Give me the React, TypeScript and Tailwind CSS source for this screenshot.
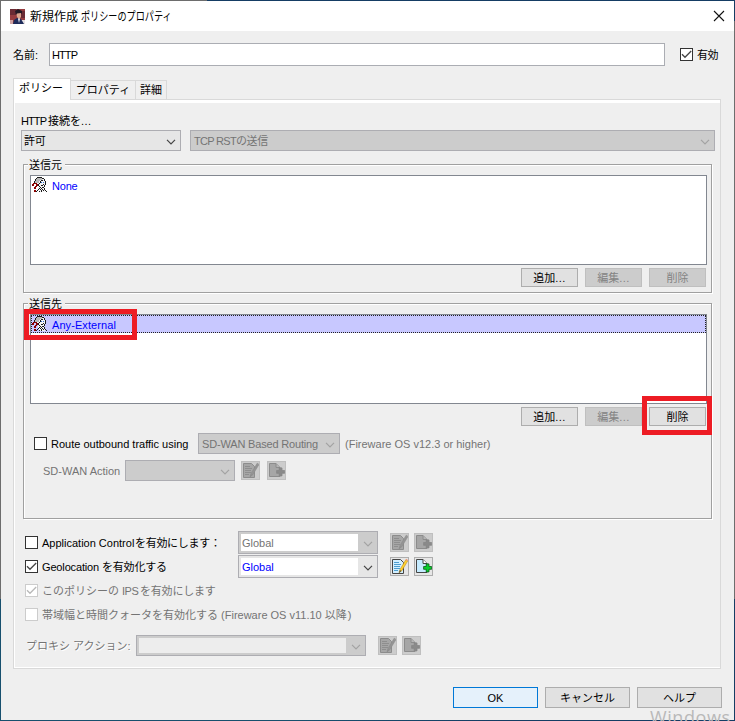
import type { ReactNode } from "react";

function Check({ checked = false, disabled = false }: { checked?: boolean; disabled?: boolean }) {
  return (
    <span className={`block size-[13px] shrink-0 border bg-white ${disabled ? "border-[#cccccc]" : "border-[#333333]"}`}>
      {checked && (
        <svg viewBox="0 0 11 11" className="block size-[11px]" fill="none" stroke={disabled ? "#b8b8b8" : "#444"} strokeWidth="1.3">
          <path d="M1 5.3 4 8.3 10.2 2" />
        </svg>
      )}
    </span>
  );
}

function Chevron({ disabled = false }: { disabled?: boolean }) {
  return (
    <svg viewBox="0 0 10 6" className="mt-[2px] h-[6px] w-[10px] shrink-0" fill="none" stroke={disabled ? "#a3a3a3" : "#444"} strokeWidth="1.2">
      <path d="M1 0.8 5 4.8 9 0.8" />
    </svg>
  );
}

function Select({ className, disabled = false, children }: { className: string; disabled?: boolean; children?: ReactNode }) {
  return (
    <div className={`flex h-[21px] shrink-0 items-center justify-between border border-[#adadb2] pr-[4px] pl-[3px] ${disabled ? "bg-[#cccccc] text-[#747474]" : "bg-[#e6e6e6]"} ${className}`}>
      <span>{children}</span>
      <Chevron disabled={disabled} />
    </div>
  );
}

function Combo({ className, disabled = false, children }: { className: string; disabled?: boolean; children?: ReactNode }) {
  return (
    <div className={`flex shrink-0 items-stretch border border-[#adadb2] p-[2px] ${disabled ? "bg-[#cccccc] text-[#747474]" : "bg-[#e6e6e6] text-[#0000ff]"} ${className}`}>
      <span className={`flex flex-1 items-center pl-px ${children ? "bg-white" : "bg-[#ededed]"}`}>{children}</span>
      <span className="flex w-[17px] items-center justify-end pr-[2px]">
        <Chevron disabled={disabled} />
      </span>
    </div>
  );
}

function SmallButton({ disabled = false, children }: { disabled?: boolean; children: ReactNode }) {
  return (
    <button className={`flex h-[19px] w-[57px] items-center justify-center border ${disabled ? "border-[#bfbfbf] bg-[#cccccc] text-[#838383]" : "border-[#adadad] bg-[#e1e1e1]"}`}>
      {children}
    </button>
  );
}

function Dots() {
  return <span className="tracking-[0.4px]">...</span>;
}

function EditIcon({ disabled = false }: { disabled?: boolean }) {
  const outline = disabled ? "#8c8c8c" : "#444";
  return (
    <span className={`block size-[19px] shrink-0 border ${disabled ? "border-[#bfbfbf] bg-[#cccccc]" : "border-[#adadad] bg-[#e6e6e6]"}`}>
      <svg viewBox="0 0 17 17" className="block size-[17px]">
        <path d="M1.5 1.5h8l3 3v11h-11z" fill={disabled ? "#a6a6a6" : "#d2efff"} stroke={outline} />
        <path d="M3 4.5h5M3 6.5h7M3 8.5h6M3 10.5h6M3 12.5h4" stroke={disabled ? "#8e8e8e" : "#4d9ed0"} />
        <path d="M8 14.8 9 11.5 15 1.5 16.8 2.8 10.6 13z" fill={disabled ? "#949494" : "#ffd42e"} stroke={disabled ? "#8b8b8b" : "#c28c1e"} strokeWidth=".6" />
        <path d="M8 15 8.9 12 10.3 13z" fill={outline} />
        <path d="M14.6 2 15.3 .8 17 2 16.3 3.2z" fill={disabled ? "#999" : "#ed9a80"} />
      </svg>
    </span>
  );
}

function NewIcon({ disabled = false }: { disabled?: boolean }) {
  return (
    <span className={`block size-[19px] shrink-0 border ${disabled ? "border-[#bfbfbf] bg-[#cccccc]" : "border-[#adadad] bg-[#e6e6e6]"}`}>
      <svg viewBox="0 0 17 17" className="block size-[17px]">
        <path d="M1.5 1.5h6.5l4 4v9h-10.5z" fill={disabled ? "#a6a6a6" : "#c5ebff"} stroke={disabled ? "#8c8c8c" : "#444"} />
        <path d="M8 1.5v4h4" fill={disabled ? "#b5b5b5" : "#fff"} stroke={disabled ? "#8c8c8c" : "#444"} />
        <path d="M11.2 5.9h2.8v2.6h2.6v2.8h-2.6v2.6h-2.8v-2.6H8.6V8.5h2.6z" fill={disabled ? "#8a8a8a" : "#06d02b"} stroke={disabled ? "#868686" : "#075c18"} strokeWidth=".8" />
      </svg>
    </span>
  );
}

function IconPair({ disabled = false, className = "" }: { disabled?: boolean; className?: string }) {
  return (
    <div className={`flex gap-[5px] ${className}`}>
      <EditIcon disabled={disabled} />
      <NewIcon disabled={disabled} />
    </div>
  );
}

function AliasIcon() {
  return (
    <svg viewBox="0 0 16 16" className="size-[16px] shrink-0" shapeRendering="crispEdges">
      <path d="M4 1h7v1h2v6h-1v2h-2v1h3v4H7v-3H6V9H4z" fill="#f4f4f4" />
      <path d="M5 1h5v2H8v1H7v2H5v1H3V3h1V2h1z" fill="#b8b8b8" />
      <path d="M5 0h5v1H5zM4 1h1v1H4zM3 2h1v2H3zM2 4h1v2H2zM10 1h2v1h-2zM12 2h1v2h-1zM13 4h1v4h-1zM12 8h1v2h-1zM10 10h2v1h-2zM9 3h2v1H9zM8 4h1v2H8zM7 6h1v1H7zM6 7h1v2H6zM7 9h1v1H7zM8 10h1v1H8zM9 11h1v1H9zM11 7h1v1h-1zM9 8h2v1H9zM7 11h1v1H7zM6 12h1v1H6zM5 13h1v1H5zM4 14h1v1H4zM8 12h1v1H8zM9 13h1v2H9zM10 12h1v1h-1zM12 11h1v1h-1zM12 12h1v1h-1zM13 13h1v1h-1zM14 14h1v1h-1zM11 13h1v1h-1zM7 14h1v1H7z" fill="#1c1c1c" />
      <path d="M9 5h1v1H9zM11 5h1v1h-1z" fill="#2a6fd0" />
      <path d="M1 6h4v1H1zM0 7h2v2H0zM4 7h2v2H4zM3 9h2v1H3zM2 10h2v2H2zM2 13h2v2H2z" fill="#8b0000" />
    </svg>
  );
}

function Group({ title, className, children }: { title: string; className: string; children: ReactNode }) {
  return (
    <fieldset className={`relative ml-[9px] w-[689px] border border-[#a0a0a0] shadow-[1px_1px_0_#fff,inset_1px_1px_0_#fff] ${className}`}>
      <div className="absolute -top-[8px] left-[4px] h-[16px] bg-[#efefef] pr-[3px] pl-[1px] leading-[16px]">{title}</div>
      {children}
    </fieldset>
  );
}

export default function App() {
  return (
    <div className="relative h-[721px] w-[735px] overflow-hidden bg-[linear-gradient(#6d6d6d_0_599px,transparent_599px),linear-gradient(90deg,#17506e_0_300px,#153d64_500px)] p-px font-['Liberation_Sans','Noto_Sans_CJK_JP',sans-serif] text-[11px] leading-[16px] text-black">
      <div className="absolute top-0 left-[207px] h-[21px] w-[528px] bg-[#153d64]" />
      <div className="relative flex h-[719px] w-[733px] flex-col bg-[#efefef]">
        <header className="flex h-[30px] shrink-0 items-center bg-white pl-[9px]">
          <svg viewBox="0 0 15 15" className="size-[15px]">
            <path d="M0 0h15v15H0z" fill="#963c3f" />
            <path d="M0 0h6v6H0zM11 2h4v7h-4z" fill="#6b2b34" />
            <path d="M8 11h7v4H8z" fill="#e6e0e2" />
            <path d="M3 15 4 11l3-2 4 1 3 5z" fill="#1e2c5b" />
            <path d="M6 3h5v5L9 10 7 8z" fill="#d9a58d" />
            <path d="M5 2 8 0l4 2v3l-1-1-4 .5L6 6z" fill="#231a25" />
            <path d="M8 9.5h2L9 14z" fill="#fff" />
            <path d="M0 11h3v4H0z" fill="#cfa2a1" />
          </svg>
          <h1 className="ml-[5px] flex whitespace-pre font-['Noto_Sans_CJK_JP',sans-serif] text-[12px]">
            <span>新規作成</span>
            <span className="ml-[3px] inline-block origin-left scale-x-[0.76]">ポリシーのプロパティ</span>
          </h1>
          <svg viewBox="0 0 12 12" className="mr-[9px] ml-auto size-[12px]" stroke="#111" strokeWidth="1.1">
            <path d="M1 1 11 11M11 1 1 11" />
          </svg>
        </header>

        <div className="mt-[12px] flex h-[23px] shrink-0 items-center pl-[12px]">
          <span className="w-[36px]">名前:</span>
          <div className="flex h-[23px] w-[616px] items-center border border-[#abadb3] bg-white pl-[2px] tracking-[-0.9px]">HTTP</div>
          <label className="ml-[15px] flex items-center gap-[4px]">
            <Check checked />
            <span className="tracking-[-0.4px]">有効</span>
          </label>
        </div>

        <nav className="mt-[12px] flex h-[21px] shrink-0 items-end pl-[12px]">
          <div className="z-10 -mb-px flex h-[22px] w-[58px] items-center justify-center border border-b-0 border-[#d9d9d9] bg-white">
            <span className="-mt-[3px] -ml-[2px]">ポリシー</span>
          </div>
          <div className="flex h-[19px] w-[65px] items-center justify-center border-t border-r border-[#d9d9d9]">プロパティ</div>
          <div className="flex h-[19px] w-[31px] items-center justify-center border-t border-r border-[#d9d9d9]">詳細</div>
        </nav>

        <main className="ml-[12px] flex h-[570px] w-[708px] shrink-0 flex-col border border-[#d9d9d9] shadow-[inset_1px_-1px_0_#fff,inset_0_3px_0_#fff]">
          <div className="mt-[13px] flex h-[16px] pl-[7px]">
            <span className="w-[27px] tracking-[-0.9px]">HTTP</span>
            <span>接続を<Dots /></span>
          </div>
          <div className="mt-[1px] flex gap-[9px] pl-[7px]">
            <Select className="w-[160px]"><span className="-ml-px tracking-[-0.3px]">許可</span></Select>
            <Select className="w-[525px]" disabled>
              <span className="tracking-[-0.7px]">TCP RST</span><span className="tracking-[-0.4px]">の送信</span>
            </Select>
          </div>

          <Group title="送信元" className="mt-[13px] h-[129px]">
            <div className="mt-[10px] ml-[6px] h-[90px] w-[677px] border border-[#828790] bg-white">
              <div className="flex h-[18px] items-center pl-px text-[#0000ff]">
                <AliasIcon />
                <span className="ml-[4px] pt-px tracking-[-0.2px]">None</span>
              </div>
            </div>
            <div className="mt-[3px] mr-[5px] flex justify-end gap-[7px]">
              <SmallButton>追加<Dots /></SmallButton>
              <SmallButton disabled>編集<Dots /></SmallButton>
              <SmallButton disabled>削除</SmallButton>
            </div>
          </Group>

          <Group title="送信先" className="mt-[10px] h-[216px]">
            <div className="mt-[10px] ml-[6px] h-[90px] w-[677px] border border-[#828790] bg-white">
              <div className="flex h-[18px] items-center border border-dotted border-[#222222] bg-[#c8c8ff] text-[#0000ff]">
                <AliasIcon />
                <span className="ml-[4px] pt-[2px] tracking-[0.08px]">Any-External</span>
              </div>
            </div>
            <div className="mt-[3px] mr-[5px] flex justify-end gap-[7px]">
              <SmallButton>追加<Dots /></SmallButton>
              <SmallButton disabled>編集<Dots /></SmallButton>
              <SmallButton>削除</SmallButton>
            </div>
            <div className="mt-[7px] flex items-center pl-[10px]">
              <Check />
              <span className="ml-[4px] w-[147px]">Route outbound traffic using</span>
              <Select className="w-[142px]" disabled><span className="tracking-[-0.17px]">SD-WAN Based Routing</span></Select>
              <span className="ml-[5px] text-[#747474]">(Fireware OS v12.3 or higher)</span>
            </div>
            <div className="mt-[6px] flex items-center pl-[19px]">
              <span className="w-[82px] text-[#747474]">SD-WAN Action</span>
              <Select className="w-[110px]" disabled />
              <div className="ml-[6px] flex gap-[7px]">
                <EditIcon disabled />
                <NewIcon disabled />
              </div>
            </div>
          </Group>

          <div className="mt-[12px] flex h-[23px] items-center pl-[11px]">
            <Check />
            <span className="ml-[4px] flex w-[196px]">
              <span className="w-[93px]">Application Control</span>
              <span className="tracking-[-0.3px] whitespace-nowrap">を有効にします：</span>
            </span>
            <Combo className="h-[23px] w-[140px]" disabled>Global</Combo>
            <IconPair className="ml-[12px]" disabled />
          </div>
          <div className="mt-px flex h-[23px] items-center pl-[11px]">
            <Check checked />
            <span className="ml-[4px] flex w-[196px]">
              <span className="w-[60px] tracking-[-0.15px]">Geolocation</span>
              <span className="tracking-[-0.2px]">を有効化する</span>
            </span>
            <Combo className="h-[23px] w-[140px]">Global</Combo>
            <IconPair className="ml-[12px]" />
          </div>
          <div className="mt-[6px] flex h-[13px] items-center gap-[4px] pl-[11px] text-[#747474]">
            <Check checked disabled />
            <span className="flex">
              <span className="w-[80px]">このポリシーの</span>
              <span className="w-[18px] tracking-[-0.5px]">IPS</span>
              <span className="tracking-[-0.2px]">を有効にします</span>
            </span>
          </div>
          <div className="mt-[11px] flex h-[13px] items-center gap-[4px] pl-[11px] text-[#747474]">
            <Check disabled />
            <span>帯域幅と時間クォータを有効化する (Fireware OS v11.10 以降<span className="ml-px">)</span></span>
          </div>
          <div className="mt-[14px] flex items-center pl-[12px]">
            <span className="w-[110px] text-[#747474] [text-shadow:1px_1px_0_#fff]">プロキシ アクション:</span>
            <Combo className="h-[21px] w-[230px]" disabled />
            <IconPair className="ml-[12px]" disabled />
          </div>
        </main>

        <footer className="mt-[18px] flex justify-end gap-[7px] pr-[12px]">
          <button className="h-[21px] w-[85px] border border-[#0078d7] bg-[#e5f1fb]">OK</button>
          <button className="h-[21px] w-[85px] border border-[#adadad] bg-[#e1e1e1]">キャンセル</button>
          <button className="h-[21px] w-[85px] border border-[#adadad] bg-[#e1e1e1]">ヘルプ</button>
        </footer>
      </div>

      <div className="absolute top-[309px] left-[24px] h-[31px] w-[113px] border-[5px] border-[#ed1c24]" />
      <div className="absolute top-[396px] left-[642px] h-[39px] w-[70px] border-[5px] border-[#ed1c24]" />
      <div className="absolute top-[709px] left-[650px] font-['Open_Sans',sans-serif] text-[18px] leading-[16px] tracking-[0.6px] text-[#b9b9b9]">Windows</div>
    </div>
  );
}
